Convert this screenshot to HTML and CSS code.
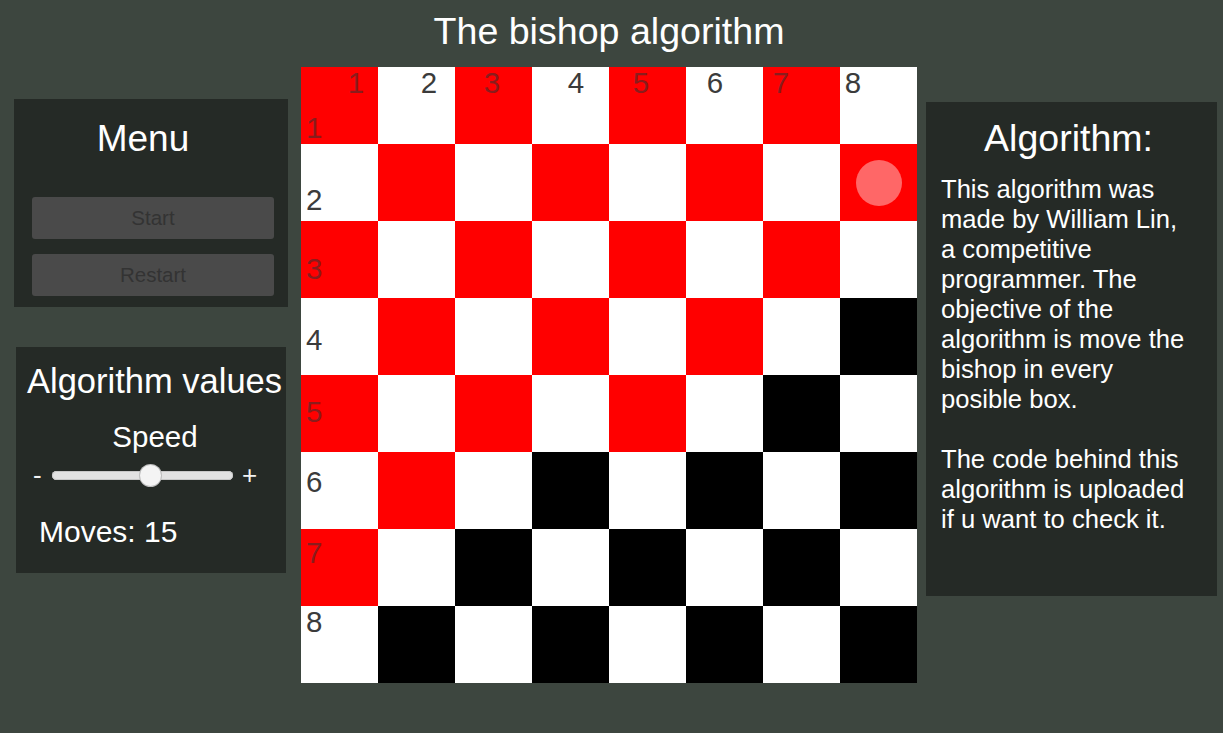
FILE: index.html
```html
<!DOCTYPE html>
<html lang="en">
<head>
<meta charset="utf-8">
<title>The bishop algorithm</title>
<link rel="stylesheet" href="styles.css">
</head>
<body>
<div class="app">
  <div class="left">
    <section class="panel menu">
      <h2 class="menu-title">Menu</h2>
      <div class="buttons">
        <button class="btn">Start</button>
        <button class="btn">Restart</button>
      </div>
    </section>
    <section class="panel values">
      <h2 class="values-title">Algorithm values</h2>
      <div class="speed">Speed</div>
      <div class="slider-row">
        <span class="sign minus">-</span>
        <div class="track"><div class="handle"></div></div>
        <span class="sign plus">+</span>
      </div>
      <div class="moves">Moves: 15</div>
    </section>
  </div>

  <div class="center">
    <h1 class="title">The bishop algorithm</h1>
    <div class="board">
      <div class="cell r"></div><div class="cell w"></div><div class="cell r"></div><div class="cell w"></div><div class="cell r"></div><div class="cell w"></div><div class="cell r"></div><div class="cell w"></div>
      <div class="cell w"></div><div class="cell r"></div><div class="cell w"></div><div class="cell r"></div><div class="cell w"></div><div class="cell r"></div><div class="cell w"></div><div class="cell r"><div class="bishop"></div></div>
      <div class="cell r"></div><div class="cell w"></div><div class="cell r"></div><div class="cell w"></div><div class="cell r"></div><div class="cell w"></div><div class="cell r"></div><div class="cell w"></div>
      <div class="cell w"></div><div class="cell r"></div><div class="cell w"></div><div class="cell r"></div><div class="cell w"></div><div class="cell r"></div><div class="cell w"></div><div class="cell b"></div>
      <div class="cell r"></div><div class="cell w"></div><div class="cell r"></div><div class="cell w"></div><div class="cell r"></div><div class="cell w"></div><div class="cell b"></div><div class="cell w"></div>
      <div class="cell w"></div><div class="cell r"></div><div class="cell w"></div><div class="cell b"></div><div class="cell w"></div><div class="cell b"></div><div class="cell w"></div><div class="cell b"></div>
      <div class="cell r"></div><div class="cell w"></div><div class="cell b"></div><div class="cell w"></div><div class="cell b"></div><div class="cell w"></div><div class="cell b"></div><div class="cell w"></div>
      <div class="cell w"></div><div class="cell b"></div><div class="cell w"></div><div class="cell b"></div><div class="cell w"></div><div class="cell b"></div><div class="cell w"></div><div class="cell b"></div>

      <span class="lbl col c1 on-red">1</span>
      <span class="lbl col c2">2</span>
      <span class="lbl col c3 on-red">3</span>
      <span class="lbl col c4">4</span>
      <span class="lbl col c5 on-red">5</span>
      <span class="lbl col c6">6</span>
      <span class="lbl col c7 on-red">7</span>
      <span class="lbl col c8">8</span>

      <span class="lbl row r1 on-red">1</span>
      <span class="lbl row r2">2</span>
      <span class="lbl row r3 on-red">3</span>
      <span class="lbl row r4">4</span>
      <span class="lbl row r5 on-red">5</span>
      <span class="lbl row r6">6</span>
      <span class="lbl row r7 on-red">7</span>
      <span class="lbl row r8">8</span>
    </div>
  </div>

  <section class="panel info">
    <h2 class="info-title">Algorithm:</h2>
    <p class="info-text">This algorithm was<br>made by William Lin,<br>a competitive<br>programmer. The<br>objective of the<br>algorithm is move the<br>bishop in every<br>posible box.</p>
    <p class="info-text second">The code behind this<br>algorithm is uploaded<br>if u want to check it.</p>
  </section>
</div>
</body>
</html>
```

FILE: styles.css
```css
html, body {
  margin: 0;
  padding: 0;
}
body {
  background: #3d463f;
  font-family: "Liberation Sans", Arial, sans-serif;
  color: #ffffff;
  width: 1223px;
  height: 733px;
  overflow: hidden;
}
h1, h2, p {
  margin: 0;
  font-weight: normal;
}
.app {
  display: flex;
  align-items: flex-start;
  padding-left: 14px;
}

/* left column */
.left {
  width: 274px;
  padding-top: 99px;
  display: flex;
  flex-direction: column;
  gap: 40px;
}
.panel {
  background: #252a26;
  box-sizing: border-box;
}
.menu {
  width: 274px;
  height: 208px;
  padding: 19px 14px 0 18px;
}
.menu-title {
  font-size: 37px;
  line-height: 42px;
  text-align: center;
  padding-right: 20px;
  margin-bottom: 37px;
}
.buttons {
  display: flex;
  flex-direction: column;
  gap: 15px;
}
.btn {
  display: block;
  flex: 0 0 auto;
  box-sizing: border-box;
  width: 242px;
  height: 42px;
  border: none;
  border-radius: 3px;
  background: #4a4a4a;
  color: #333333;
  font-family: "Liberation Sans", Arial, sans-serif;
  font-size: 20.5px;
  padding: 0;
  margin: 0;
}

.values {
  width: 270px;
  height: 226px;
  margin-left: 2px;
  padding-top: 14px;
}
.values-title {
  font-size: 34.5px;
  line-height: 40px;
  padding-left: 11px;
  white-space: nowrap;
}
.speed {
  font-size: 29.5px;
  line-height: 34px;
  text-align: center;
  padding-left: 8px;
  margin-top: 19px;
}
.slider-row {
  display: flex;
  align-items: center;
  height: 22px;
  margin-top: 10px;
  padding-left: 17px;
}
.sign {
  font-size: 26px;
  line-height: 22px;
  color: #f2f2f2;
}
.minus {
  width: 19px;
}
.track {
  position: relative;
  width: 181px;
  height: 9px;
  border-radius: 5px;
  background: #e2e2e2;
  box-shadow: inset 0 0 0 1px #c8c8c8;
}
.handle {
  position: absolute;
  left: 88px;
  top: -6px;
  width: 21px;
  height: 21px;
  border-radius: 50%;
  background: #f4f4f4;
  box-shadow: 0 0 0 1px #bdbdbd;
}
.plus {
  margin-left: 9px;
}
.moves {
  font-size: 30px;
  line-height: 34px;
  padding-left: 23px;
  margin-top: 29px;
}

/* center */
.center {
  margin-left: 13px;
  width: 616px;
}
.title {
  font-size: 37.6px;
  line-height: 42px;
  text-align: center;
  padding-top: 10px;
  margin-bottom: 15px;
}
.board {
  position: relative;
  display: grid;
  grid-template-columns: repeat(8, 77px);
  grid-template-rows: repeat(8, 77px);
  width: 616px;
  height: 616px;
}
.cell {
  display: flex;
  align-items: center;
  justify-content: center;
}
.cell.r { background: #ff0000; }
.cell.w { background: #ffffff; }
.cell.b { background: #000000; }
.bishop {
  width: 46px;
  height: 46px;
  border-radius: 50%;
  background: #ff6767;
}

.lbl {
  position: absolute;
  font-size: 29.5px;
  line-height: 29px;
  color: #3b3b3b;
}
.lbl.on-red {
  color: #8a1c1c;
}
.lbl.col {
  top: 1px;
  transform: translateX(-50%);
}
.c1 { left: 55px; }
.c2 { left: 128px; }
.c3 { left: 191px; }
.c4 { left: 275px; }
.c5 { left: 340px; }
.c6 { left: 414px; }
.c7 { left: 480px; }
.c8 { left: 552px; }

.lbl.row {
  left: 5px;
}
.r1 { top: 46px; }
.r2 { top: 118px; }
.r3 { top: 187px; }
.r4 { top: 258px; }
.r5 { top: 330px; }
.r6 { top: 400px; }
.r7 { top: 471px; }
.r8 { top: 540px; }

/* right */
.info {
  margin-left: 9px;
  margin-top: 102px;
  width: 291px;
  height: 494px;
  padding: 15px 8px 0 15px;
}
.info-title {
  font-size: 37.5px;
  line-height: 42px;
  text-align: center;
  margin-bottom: 15px;
  margin-left: -13px;
}
.info-text {
  font-size: 25.6px;
  line-height: 30px;
  white-space: nowrap;
}
.info-text.second {
  margin-top: 30px;
}
```
